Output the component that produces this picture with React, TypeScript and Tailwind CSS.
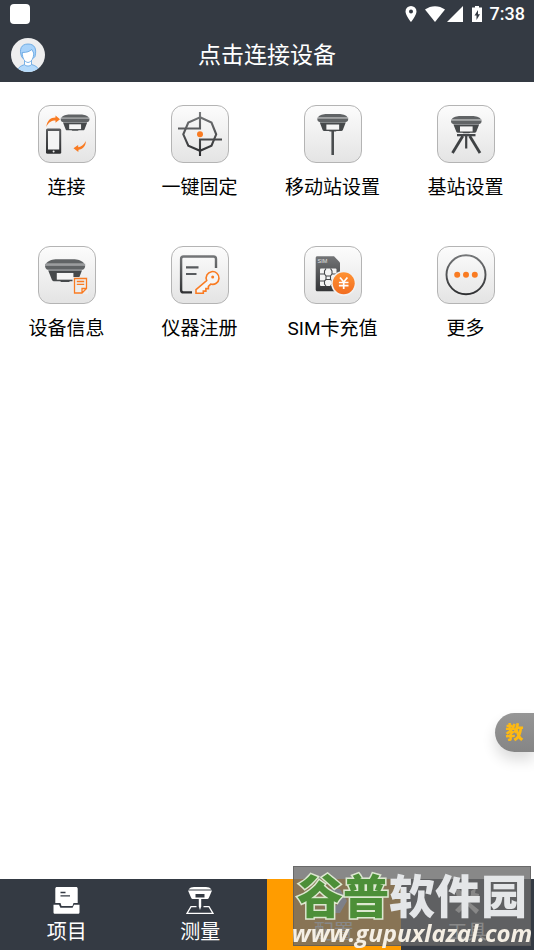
import type { ReactNode } from "react";

const ORANGE = "#f97b22";

// GNSS receiver head, drawn in a 30x17 box
function Receiver({ x, y, scale = 1 }: { x: number; y: number; scale?: number }) {
  return (
    <g transform={`translate(${x} ${y}) scale(${scale})`}>
      <path d="M.6 3.4C2 .9 6 0 9 0h12c3 0 7 .9 8.400 3.400z" fill="#606365" />
      <path d="M0 3.400h30v1.300H0z" fill="#9b9d9f" />
      <path d="M0 4.700h30c0 1.800-.7 2.800-2 3.100H2C.7 7.500 0 6.500 0 4.700z" fill="#606365" />
      <path d="M2.500 7.800h25v.8h-25z" fill="#85888a" />
      <path
        d="M2.500 8.600h25l-2.700 6.900c-.4.700-1 .9-2 .9h-4l-1 .6h-5.600l-1-.6h-4c-1 0-1.600-.2-2-.9z"
        fill="#46494b"
      />
      <path d="M8.800 10.200h12.400v5H8.800z" fill="#f5f5f5" />
    </g>
  );
}

function ConnectIcon() {
  return (
    <>
      <path d="M8.300 22C9 15.500 12.500 12.600 17.500 12.500V10.500l4.500 3.700-4.500 3.500v-2.200C13.500 15.500 10.500 17 8.300 22z" fill={ORANGE} />
      <path d="M47.800 36c0 5.500-3.300 8.400-7.300 8.700l-.2 2.300-4.800-3.700 4.600-3.300.2 2.200c3.500-.5 5.500-2.300 7.500-6.200z" fill={ORANGE} />
      <rect x="8" y="23.500" width="15.200" height="25.200" rx="1.500" fill="url(#ink)" />
      <rect x="10" y="26" width="11.200" height="18.500" fill="#f4f4f4" />
      <circle cx="15.600" cy="46.600" r="1" fill="#eee" />
      <Receiver x={22.7} y={9.5} scale={0.96} />
    </>
  );
}

function FixIcon() {
  return (
    <>
      <g fill="none" stroke="url(#ink)" strokeWidth="2.100">
        <path d="M29 12.300l11.500 5.200 4.700 11.800-4.700 11.400L29 45.800l-11.700-5.100-5-11.400 5-11.800z" />
        <path d="M29 7v16.500H7" />
        <path d="M29 51V34.500h22" />
      </g>
      <circle cx="29" cy="29.300" r="3" fill={ORANGE} />
    </>
  );
}

function RoverIcon() {
  return (
    <>
      <path d="M27.400 25h2.600v25h-2.600z" fill="#4a4d4f" />
      <Receiver x={13.3} y={9} scale={1.03} />
    </>
  );
}

function BaseIcon() {
  return (
    <>
      <Receiver x={14} y={11} scale={1.02} />
      <path d="M20 29h18.500v2.300H20z" fill="#44474a" />
      <g stroke="#3e4143" fill="none">
        <path d="M25.800 31L15.500 48" strokeWidth="2.800" />
        <path d="M32.700 31L43 48" strokeWidth="2.800" />
        <path d="M29.200 31v12.500" strokeWidth="2.200" />
      </g>
    </>
  );
}

function DeviceInfoIcon() {
  return (
    <>
      <Receiver x={7} y={13.3} scale={1.34} />
      <path d="M34.500 31H50v17H34.500z" fill="#ededed" />
      <path
        d="M36.500 32.500h12v10l-4.500 4.500h-7.500zM48.500 42.500H44V47M38.800 35.500h7.400M38.800 38.300h7.400"
        fill="none"
        stroke={ORANGE}
        strokeWidth="1.300"
      />
    </>
  );
}

function RegisterIcon() {
  return (
    <>
      <path
        d="M21 46.400h-8.500c-1.700 0-2.400-.8-2.400-2.400V13c0-1.700.8-2.500 2.400-2.500h30c1.700 0 2.500.8 2.500 2.500v9"
        fill="none"
        stroke="url(#ink)"
        strokeWidth="2.400"
      />
      <path d="M15 21.300h12.500M15 28h10.500" stroke="#585b5e" strokeWidth="2.200" />
      <path
        d="M35.700 34.500a6.400 6.400 0 1 1 4 3.600l-2.300 2.300v2.200h-2.500v2.500h-2.600v2.100H25v-3.500z"
        fill="#f5f5f5"
        stroke={ORANGE}
        strokeWidth="1.600"
      />
      <circle cx="41.700" cy="31" r="1.500" fill={ORANGE} />
    </>
  );
}

function SimIcon() {
  return (
    <>
      <path d="M13.500 10.300H30l6 6.200v28.800H13.500c-1.200 0-1.800-.6-1.800-1.800V12.100c0-1.200.6-1.800 1.800-1.800z" fill="url(#ink)" />
      <text x="13.500" y="17" fontSize="5.500" fontFamily="Liberation Sans, sans-serif" fill="#e5e5e5">
        SIM
      </text>
      <rect x="16" y="22.500" width="16.500" height="17.500" rx="1" fill="#f4f4f4" />
      <path
        d="M16 28h4.500l1.500 2v3.500L20.500 35H16M32.500 28H28l-1.500 2v3.500L28 35h4.500M20.500 28v-3l1.500-2.500M28 28v-3l-1.500-2.500M20.500 35v3L22 40M28 35v3l-1.500 2M22 30h4.500M22 33.500h4.500"
        fill="none"
        stroke="#44474a"
        strokeWidth="1.100"
      />
      <circle cx="39.700" cy="37.300" r="12.600" fill="#f1f1f1" />
      <circle cx="39.700" cy="37.300" r="11" fill="url(#coin)" />
      <path d="M36 31.500l3.700 4.500 3.700-4.500M34.900 36.500h9.600M34.900 39.600h9.600M39.700 36v7" fill="none" stroke="#fff" strokeWidth="1.700" />
    </>
  );
}

function MoreIcon() {
  return (
    <>
      <circle cx="29" cy="28.800" r="19.500" fill="none" stroke="url(#ink)" strokeWidth="1.900" />
      <g fill={ORANGE}>
        <circle cx="20.200" cy="28.800" r="3" />
        <circle cx="29" cy="28.800" r="3" />
        <circle cx="37.800" cy="28.800" r="3" />
      </g>
    </>
  );
}

const menuItems: { label: string; icon: ReactNode }[] = [
  { label: "连接", icon: <ConnectIcon /> },
  { label: "一键固定", icon: <FixIcon /> },
  { label: "移动站设置", icon: <RoverIcon /> },
  { label: "基站设置", icon: <BaseIcon /> },
  { label: "设备信息", icon: <DeviceInfoIcon /> },
  { label: "仪器注册", icon: <RegisterIcon /> },
  { label: "SIM卡充值", icon: <SimIcon /> },
  { label: "更多", icon: <MoreIcon /> },
];

const tabs: { label: string; icon: ReactNode }[] = [
  {
    label: "项目",
    icon: (
      <>
        <path d="M4 0h19c1 0 1.700.7 1.700 1.700V16h-4.200l-1 3h-11l-1-3H2.300V1.700C2.300.7 3 0 4 0z" fill="#fff" />
        <path d="M7.500 5.500h5M7.500 8.800h9.500" stroke="#343a43" strokeWidth="1.300" />
        <path d="M.5 17.700H6l1.400 3h12.200l1.400-3h5.500v7.500c0 1-.6 1.600-1.600 1.600H2.100c-1 0-1.600-.6-1.600-1.600z" fill="#fff" />
      </>
    ),
  },
  {
    label: "测量",
    icon: (
      <>
        <path d="M2.500 2.600C3.500.8 6 0 8 0h12c2 0 4.500.8 5.500 2.600z" fill="#fff" />
        <path d="M2 3.500h24L23 10.500c-.4 1-1.200 1.500-2.200 1.500H7.200c-1 0-1.800-.5-2.200-1.500z" fill="#fff" />
        <path d="M9.500 7h9v3.500h-9z" fill="#343a43" />
        <path d="M12.800 12h2.400v7.500L14 23l-1.200-3.500z" fill="#fff" />
        <path d="M10.500 19.700H5L1 26.300h26l-4-6.600h-5.500" fill="none" stroke="#fff" strokeWidth="1.300" />
      </>
    ),
  },
  {
    label: "配置",
    icon: (
      <path
        fillRule="evenodd"
        d="M8 2h12l7 12-7 12H8L1 14zM14 9a5 5 0 1 0 0 10 5 5 0 0 0 0-10z"
        fill="#c8d7ff"
      />
    ),
  },
  {
    label: "工具",
    icon: (
      <path
        d="M2 3l4-1 4 4v3l4 3 4-4V4l5-3-1 5 4 1c0 4-4 6-7 5l-3 3 10 8-3 4-9-9-8 8-4-3 9-9-4-4H4z"
        fill="#fff"
      />
    ),
  },
];

function StatusBar() {
  return (
    <div className="flex h-[27px] items-center justify-between pr-[9px] pl-[10px]">
      <span className="h-5 w-5 rounded bg-white" />
      <div className="flex items-center text-white">
        <svg width="12" height="16" viewBox="0 0 12 16" className="mr-2">
          <path fillRule="evenodd" d="M6 0a5.500 5.500 0 0 0-5.500 5.500C.5 9.500 6 16 6 16s5.500-6.500 5.500-10.500A5.500 5.500 0 0 0 6 0zm0 3.500a2 2 0 1 1 0 4 2 2 0 0 1 0-4z" fill="#fff" />
        </svg>
        <svg width="20" height="16" viewBox="0 0 20 16" className="mr-0.5">
          <path d="M0 3.500C6-1 14-1 20 3.500L10 16z" fill="#fff" />
        </svg>
        <svg width="16" height="16" viewBox="0 0 16 16" className="mr-[9px]">
          <path d="M16 0v16H0z" fill="#fff" />
        </svg>
        <svg width="10" height="16" viewBox="0 0 10 16" className="mr-2">
          <path d="M3 0h4v1.500h3V16H0V1.500h3z" fill="#fff" />
          <path d="M6 4L2.500 9.500h2V14L8 8.200H6z" fill="#343a43" />
        </svg>
        <span className="font-[Roboto,sans-serif] text-[18px] leading-6 font-medium">7:38</span>
      </div>
    </div>
  );
}

function Avatar() {
  return (
    <svg width="34" height="34" viewBox="0 0 34 34">
      <clipPath id="avatar">
        <circle cx="17" cy="17" r="17" />
      </clipPath>
      <g clipPath="url(#avatar)">
        <path d="M0 0h34v34H0z" fill="#eeeeef" />
        <path d="M6 36c0-6 3-8 8-9.500h6.500c5 1.500 8 3.500 8 9.500z" fill="#b5dafb" stroke="#5c9fe0" strokeWidth=".8" />
        <path d="M13.500 22h7v4.500c-1.500 2-5.500 2-7 0z" fill="#fff" stroke="#5c9fe0" strokeWidth=".8" />
        <path d="M10.500 18.500c-2.500-7-.5-12.500 6.500-12.500 6.500 0 9 4.500 7 12.500l-2 2H12z" fill="#a9d3fa" stroke="#5c9fe0" strokeWidth=".8" />
        <path d="M11.300 14.500c5 0 7-1 9.500-3 .6 1.500 1.500 2.500 1.900 3.500 0 5-2 9-5.700 9.500-3.700-.5-5.700-4.500-5.700-10z" fill="#fff" stroke="#5c9fe0" strokeWidth=".8" />
      </g>
    </svg>
  );
}

export default function App() {
  return (
    <div className="flex min-h-screen flex-col bg-white font-[Roboto,'Noto_Sans_CJK_SC',sans-serif] text-black">
      <svg width="0" height="0" className="absolute" aria-hidden="true">
        <defs>
          <linearGradient id="ink" gradientUnits="userSpaceOnUse" x1="0" y1="8" x2="0" y2="50">
            <stop offset="0" stopColor="#77797b" />
            <stop offset="1" stopColor="#2b2c2e" />
          </linearGradient>
          <linearGradient id="coin" x1="0" y1="0" x2="0" y2="1">
            <stop offset="0" stopColor="#ff9233" />
            <stop offset="1" stopColor="#f26d21" />
          </linearGradient>
        </defs>
      </svg>

      <header className="bg-[#343a43]">
        <StatusBar />
        <div className="grid h-[55px] grid-cols-[1fr_auto_1fr] items-center px-[11px]">
          <button type="button" aria-label="用户" className="justify-self-start">
            <Avatar />
          </button>
          <button type="button" className="pt-0.5 text-[23px] leading-8 text-white">
            点击连接设备
          </button>
        </div>
      </header>

      <main className="flex-1">
        <div className="grid grid-cols-4 gap-y-11 pt-[23px] pr-0.5">
          {menuItems.map((item) => (
            <button key={item.label} type="button" className="flex flex-col items-center gap-[11px]">
              <span className="rounded-xl border border-[#b4b4b4] bg-linear-to-b from-[#fcfcfc] to-[#e4e4e4]">
                <svg width="56" height="56" viewBox="1 1 56 56">
                  {item.icon}
                </svg>
              </span>
              <span className="text-[19px] leading-7 whitespace-nowrap">{item.label}</span>
            </button>
          ))}
        </div>
      </main>

      <nav className="grid grid-cols-4 bg-[#343a43]">
        {tabs.map((tab) => (
          <button
            key={tab.label}
            type="button"
            className={`flex flex-col items-center gap-[3px] pt-2 pb-1 text-white ${
              tab.label === "配置" ? "bg-[#ff9c00]" : ""
            }`}
          >
            <svg width="28" height="28" viewBox="0 0 28 28">
              {tab.icon}
            </svg>
            <span className="text-[20px] leading-7">{tab.label}</span>
          </button>
        ))}
      </nav>

      <button
        type="button"
        className="fixed right-0 bottom-[198px] h-[39px] w-[39px] rounded-l-full bg-linear-to-b from-[#969696] to-[#858585] text-[18px] leading-[39px] font-black text-[#fdb913] shadow-[0_8px_14px_rgba(0,0,0,0.14)]"
      >
        教
      </button>

      <div className="pointer-events-none fixed right-[3px] bottom-1 flex h-20 w-[238px] flex-col items-center border border-[#555]/60 bg-[#6a6a6a]/80 whitespace-nowrap">
        <span className="pt-1.5 text-[46px] leading-[48px] font-black text-[#e4e6e8]">
          <span className="text-[#4c8f38] [-webkit-text-stroke:3px_#dce8d0] [paint-order:stroke_fill]">谷普</span>软件园
        </span>
        <span className="font-['Open_Sans',sans-serif] text-[24px] leading-6 font-bold text-[#f5efe4] italic">
          www.gupuxlazal.com
        </span>
      </div>
    </div>
  );
}
